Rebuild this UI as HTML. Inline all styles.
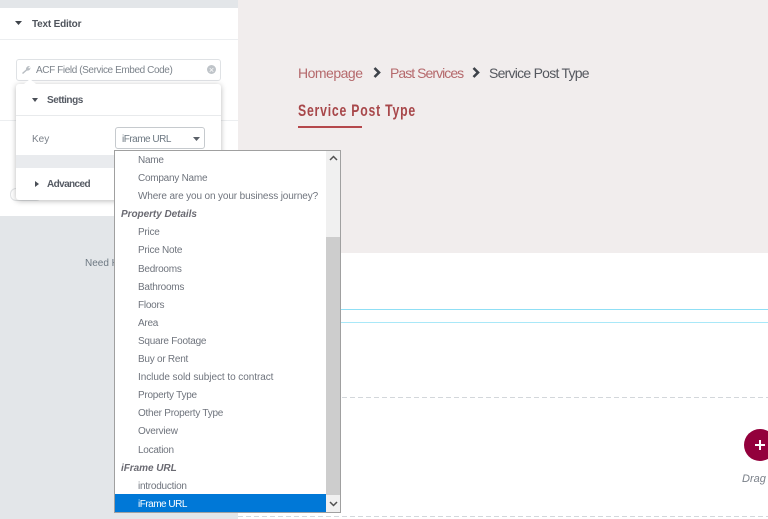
<!DOCTYPE html>
<html><head><meta charset="utf-8"><style>
html,body{margin:0;padding:0}
html{width:768px;height:519px;overflow:hidden}
body{width:768px;height:519px;position:relative;overflow:hidden;background:#fff;font-family:"Liberation Sans",sans-serif;color:#6d7882}
#w{left:0;top:0;width:768px;height:519px;overflow:hidden;filter:blur(.3px)}
div,span{position:absolute;white-space:nowrap}
svg{position:absolute}
.it{left:23px;font-size:10px;line-height:18px;color:#6f747d;height:18px;letter-spacing:-.25px}
.gr{left:6px;font-size:10px;line-height:18px;font-weight:bold;font-style:italic;color:#6a6a72;height:18px;letter-spacing:-.05px}
.da{left:238px;width:530px;height:1px;background:repeating-linear-gradient(90deg,#d3d7db 0 5px,transparent 5px 8px)}
</style></head><body><div id="w">
<div style="left:0;top:0;width:238px;height:519px;background:#e3e6e9"></div>
<div style="left:238px;top:0;width:530px;height:253px;background:#f1eded"></div>
<div style="left:0;top:8px;width:238px;height:208px;background:#fff"></div>
<div style="left:0;top:39px;width:238px;height:1px;background:#eceef0"></div>
<div style="left:0;top:120px;width:238px;height:1px;background:#eceef0"></div>
<svg style="left:15px;top:21px" width="7" height="4"><path d="M0 0H7L3.5 4Z" fill="#3f444b"/></svg>
<div style="left:32px;top:17px;font-size:10px;line-height:15px;font-weight:bold;color:#4f545c;letter-spacing:-.2px">Text Editor</div>
<div style="left:16px;top:59px;width:203px;height:20px;border:1px solid #dfe2e5;border-radius:3px;background:#fff"></div>
<svg style="left:21px;top:65px" width="10" height="9" viewBox="0 0 10 9"><path d="M1 8L5 4.5C4.8 2.5 6.5 .6 9 1L7.3 2.7L8 3.6L9.5 2.4C9.6 4.6 7.8 6 6 5.5L2 9Z" fill="#b9bec3"/></svg>
<div style="left:36px;top:63px;font-size:10px;line-height:15px;color:#7d848c;letter-spacing:-.4px">ACF Field (Service Embed Code)</div>
<div style="left:207px;top:65px;width:9px;height:9px;border-radius:50%;background:#bfc4c9"></div>
<div style="left:207px;top:63.5px;width:9px;height:12px;font-size:9px;line-height:12px;text-align:center;color:#fff">×</div>
<div style="left:10px;top:188px;width:30px;height:11px;border:1px solid #e2e4e6;border-radius:6px;background:#fff"></div>
<div style="left:16px;top:84px;width:205px;height:116px;background:#fff;border-radius:3px;box-shadow:0 1px 6px rgba(0,0,0,.28)"></div>
<div style="left:24px;top:79px;width:0;height:0;border-left:6px solid transparent;border-right:6px solid transparent;border-bottom:5px solid #fff"></div>
<div style="left:16px;top:115px;width:205px;height:1px;background:#e8eaec"></div>
<div style="left:16px;top:155px;width:205px;height:13px;background:#e9ebee"></div>
<svg style="left:32px;top:98px" width="6" height="4"><path d="M0 0H6L3 4Z" fill="#4a4f57"/></svg>
<div style="left:47px;top:93px;font-size:10px;line-height:15px;font-weight:bold;color:#565b64;letter-spacing:-.45px">Settings</div>
<div style="left:32px;top:132px;font-size:10px;line-height:15px;color:#7a8089">Key</div>
<div style="left:115px;top:127px;width:88px;height:20px;border:1px solid #c6cace;border-radius:3px;background:#fff"></div>
<div style="left:122px;top:132px;font-size:10px;line-height:15px;color:#6d7882;letter-spacing:-.5px">iFrame URL</div>
<svg style="left:193px;top:137px" width="7" height="4"><path d="M0 0H7L3.5 4Z" fill="#5a6068"/></svg>
<svg style="left:35px;top:181px" width="4" height="6"><path d="M0 0V6L4 3Z" fill="#4a4f57"/></svg>
<div style="left:47px;top:177px;font-size:10px;line-height:15px;font-weight:bold;color:#565b64;letter-spacing:-.6px">Advanced</div>
<div style="left:85px;top:256px;font-size:10px;line-height:15px;color:#6d7882">Need Help</div>

<div style="left:298px;top:65px;font-size:14px;line-height:17px;color:#b5696c;letter-spacing:-.5px">Homepage</div>
<svg style="left:373px;top:67px" width="8" height="11"><path d="M1.5 1L6 5.5L1.5 10" fill="none" stroke="#3d4249" stroke-width="2.6"/></svg>
<div style="left:390px;top:65px;font-size:14px;line-height:17px;color:#b5696c;letter-spacing:-.95px">Past Services</div>
<svg style="left:472px;top:67px" width="8" height="11"><path d="M1.5 1L6 5.5L1.5 10" fill="none" stroke="#3d4249" stroke-width="2.6"/></svg>
<div style="left:489px;top:65px;font-size:14px;line-height:17px;color:#55585f;letter-spacing:-.75px">Service Post Type</div>
<div style="left:298px;top:101px;font-size:17px;line-height:20px;font-weight:bold;color:#a8474a;letter-spacing:1.1px;transform-origin:0 50%;transform:scaleX(.72)">Service Post Type</div>
<div style="left:298px;top:126px;width:64px;height:2px;background:#b5484c"></div>

<div style="left:238px;top:309px;width:530px;height:1px;background:#8fdff5"></div>
<div style="left:238px;top:322px;width:530px;height:1px;background:#a9e8f8"></div>
<div class="da" style="top:397px"></div>
<div class="da" style="top:516px"></div>
<div style="left:744px;top:429px;width:32px;height:32px;border-radius:50%;background:#93003c"></div>
<div style="left:755px;top:444px;width:10px;height:2px;background:#fff"></div>
<div style="left:759px;top:440px;width:2px;height:10px;background:#fff"></div>
<div style="left:742px;top:472px;width:26px;overflow:hidden;font-size:11px;line-height:14px;font-style:italic;color:#7a8089">Drag widget here</div>

<div style="left:114px;top:150px;width:225px;height:361px;background:#fff;border:1px solid #a0a0a0;overflow:hidden">
<div style="left:0;top:1px;width:225px;height:361px">
<div class="it" style="top:0">Name</div>
<div class="it" style="top:18px">Company Name</div>
<div class="it" style="top:36px;letter-spacing:-.13px">Where are you on your business journey?</div>
<div class="gr" style="top:54px">Property Details</div>
<div class="it" style="top:72px">Price</div>
<div class="it" style="top:90px">Price Note</div>
<div class="it" style="top:109px">Bedrooms</div>
<div class="it" style="top:127px">Bathrooms</div>
<div class="it" style="top:145px">Floors</div>
<div class="it" style="top:163px">Area</div>
<div class="it" style="top:181px">Square Footage</div>
<div class="it" style="top:199px">Buy or Rent</div>
<div class="it" style="top:217px;letter-spacing:-.06px">Include sold subject to contract</div>
<div class="it" style="top:235px">Property Type</div>
<div class="it" style="top:253px">Other Property Type</div>
<div class="it" style="top:271px">Overview</div>
<div class="it" style="top:290px">Location</div>
<div class="gr" style="top:308px">iFrame URL</div>
<div class="it" style="top:326px">introduction</div>
<div style="left:0;top:342px;width:211px;height:18px;background:#0078d7"></div>
<div class="it" style="top:344px;color:#fff;letter-spacing:-.5px">iFrame URL</div>
</div>
<div style="left:211px;top:0;width:14px;height:361px;background:#f0f0f0"></div>
<div style="left:211px;top:86px;width:14px;height:258px;background:#cdcdcd"></div>
<svg style="left:214px;top:4px" width="9" height="6"><path d="M1 5L4.5 1.5L8 5" fill="none" stroke="#505050" stroke-width="1.5"/></svg>
<svg style="left:214px;top:350px" width="9" height="6"><path d="M1 1L4.5 4.5L8 1" fill="none" stroke="#505050" stroke-width="1.5"/></svg>
</div>
</div></body></html>
